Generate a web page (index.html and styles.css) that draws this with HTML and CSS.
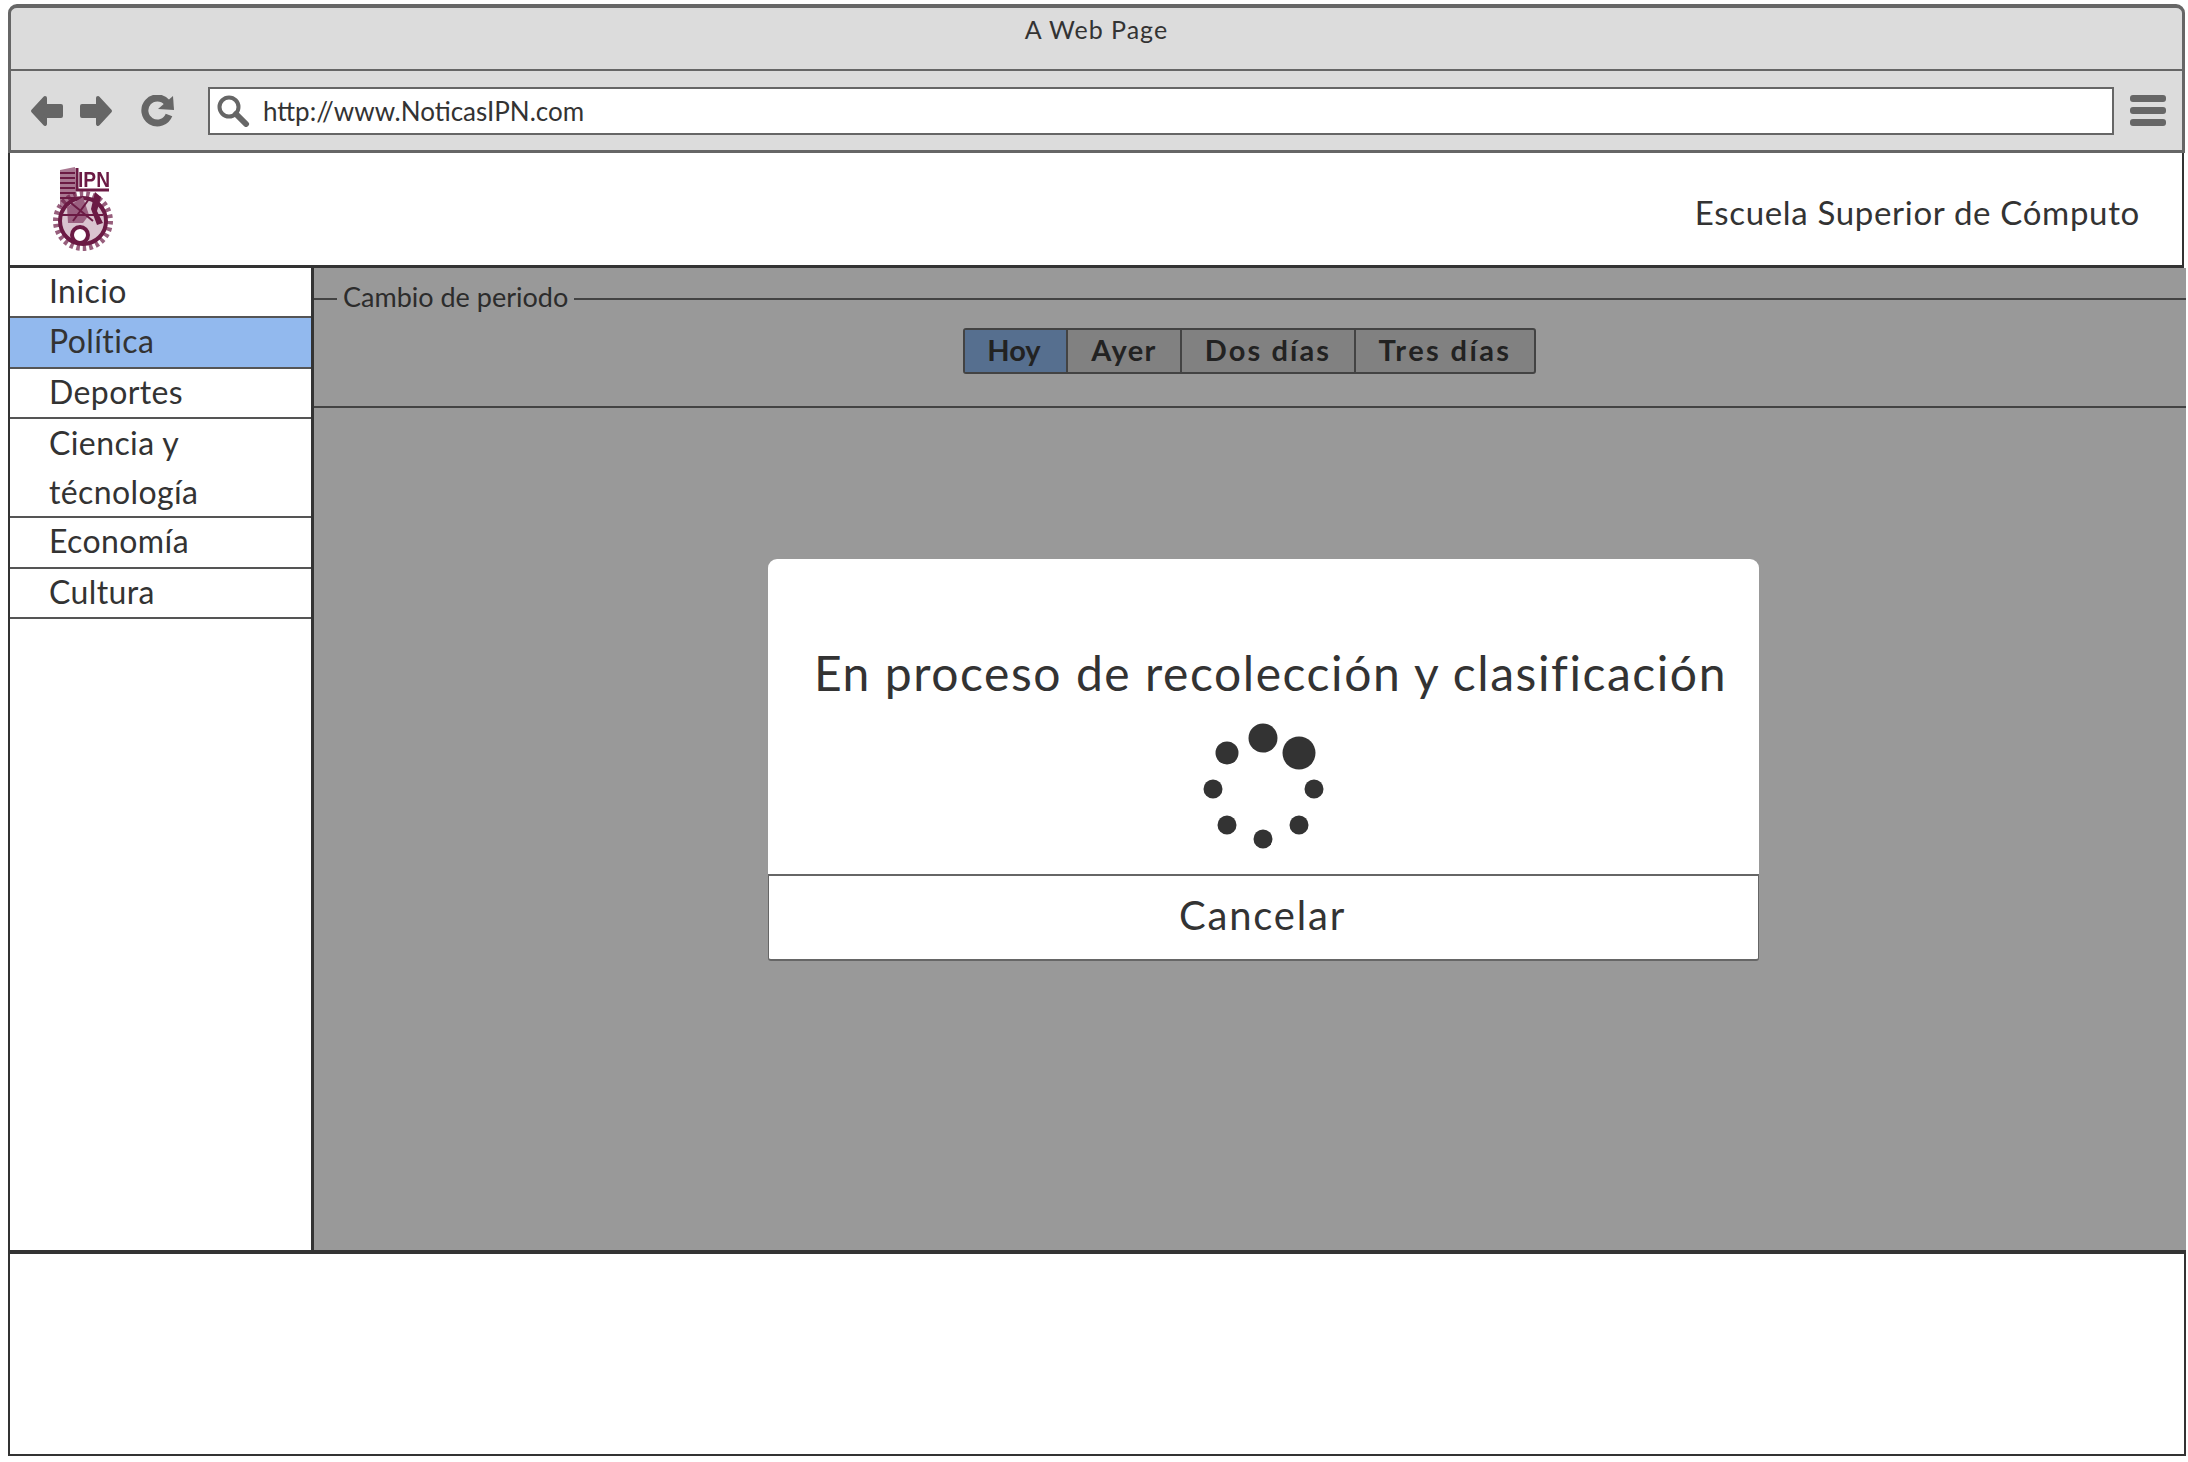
FILE: index.html
```html
<!DOCTYPE html>
<html lang="es">
<head>
<meta charset="utf-8">
<title>A Web Page</title>
<link rel="stylesheet" href="styles.css">
</head>
<body>
<div class="window">
  <div class="chrome">
    <div class="titlebar">A Web Page</div>
    <div class="toolbar">
      <svg class="nav-icons" width="160" height="32" viewBox="0 0 160 32">
        <path class="ico-round" d="M15 3 L3 16 L15 29 L15 21 L31 21 L31 11 L15 11 Z"/>
        <path class="ico-round" d="M68 3 L80 16 L68 29 L68 21 L52 21 L52 11 L68 11 Z"/>
        <path class="ico-line" d="M137 7.5 A12.5 12.5 0 1 0 139 20"/>
        <path class="ico" d="M128 14 L143 1 L144 15 Z"/>
      </svg>
      <div class="urlbar">
        <svg class="search" width="34" height="32" viewBox="0 0 34 32">
          <circle class="ico-ring" cx="13" cy="12" r="9.5"/>
          <path class="ico-handle" d="M20 19 L30 29"/>
        </svg>
        <span class="url">http://www.NoticasIPN.com</span>
      </div>
      <div class="burger"><span></span><span></span><span></span></div>
    </div>
  </div>
  <header class="pagehead">
    <svg class="logo" width="60" height="87" viewBox="0 0 60 87">
      <g class="logo-art">
        <path class="logo-tower" d="M7 5 L22 2 L23 40 L7 42 Z"/>
        <path class="logo-stripes" d="M7 8 H22 M7 13 H22 M7 18 H22 M7 23 H22 M7 28 H22 M7 33 H22"/>
        <path class="logo-frame" d="M24 3 V25 H56"/>
        <text class="logo-text" x="25" y="22" textLength="32" lengthAdjust="spacingAndGlyphs">IPN</text>
        <circle class="logo-teeth" cx="30" cy="56" r="27"/>
        <circle class="logo-gear" cx="30" cy="56" r="23"/>
        <path class="logo-bolt" d="M42 27 L48 32 L44 46 L50 58 L44 60 L38 44 Z"/>
        <path class="logo-inner" d="M14 42 L30 32 L36 50 L30 58 L15 58 Z"/>
        <path class="logo-mark" d="M18 38 L40 56 M36 34 L20 56 M8 50 H50"/>
        <circle class="logo-white" cx="27" cy="70" r="8"/>
      </g>
    </svg>
    <div class="school">Escuela Superior de Cómputo</div>
  </header>
  <div class="content">
    <nav class="sidebar">
      <a class="item">Inicio</a>
      <a class="item item-active">Política</a>
      <a class="item">Deportes</a>
      <a class="item item-wrap">Ciencia y<br>técnología</a>
      <a class="item">Economía</a>
      <a class="item">Cultura</a>
    </nav>
    <main class="main">
      <fieldset class="period">
        <legend class="period-label">Cambio de periodo</legend>
        <div class="tabs">
          <span class="tab tab-on">Hoy</span>
          <span class="tab tab-2">Ayer</span>
          <span class="tab tab-3">Dos días</span>
          <span class="tab tab-4">Tres días</span>
        </div>
      </fieldset>
      <div class="overlay">
        <div class="modal">
          <div class="modal-body">
            <div class="modal-title">En proceso de recolección y clasificación</div>
            <svg class="spinner" width="130" height="130" viewBox="0 0 130 130">
              <circle cx="64" cy="16" r="14.5"/>
              <circle cx="100" cy="31" r="16.5"/>
              <circle cx="28" cy="31" r="11.5"/>
              <circle cx="14" cy="67" r="9.5"/>
              <circle cx="115" cy="67" r="9.5"/>
              <circle cx="28" cy="103" r="9.5"/>
              <circle cx="100" cy="103" r="9.5"/>
              <circle cx="64" cy="117" r="9.5"/>
            </svg>
          </div>
          <div class="modal-action">Cancelar</div>
        </div>
      </div>
    </main>
  </div>
  <footer class="pagefoot"></footer>
</div>
</body>
</html>
```
FILE: styles.css
```css
* { box-sizing: border-box; }
html, body { margin: 0; padding: 0; background: #fff; }
body { padding: 4px 2px 0 8px; font-family: Lato, "Liberation Sans", sans-serif; color: #333; }
.window { width: 2178px; height: 1452px; display: flex; flex-direction: column; }

.chrome { height: 149px; margin-right: 1px; background: #dcdcdc; border: 3px solid #666; border-top-width: 4px; border-radius: 9px 9px 0 0; display: flex; flex-direction: column; }
.titlebar { height: 63px; flex: none; border-bottom: 2px solid #666; margin-left: -1px; margin-right: -1px; text-align: center; font-size: 25px; line-height: 42px; color: #333; letter-spacing: 1px; }
.toolbar { flex: 1; display: flex; align-items: flex-start; padding: 23px 0 0 19px; }
.nav-icons { flex: none; margin-top: 1px; }
.ico { fill: #666; }
.ico-round { fill: #666; stroke: #666; stroke-width: 4; stroke-linejoin: round; }
.ico-line { fill: none; stroke: #666; stroke-width: 7; }
.urlbar { flex: none; width: 1906px; height: 48px; margin: -7px 0 0 18px; background: #fff; border: 2px solid #666; display: flex; align-items: center; padding-left: 7px; }
.search { flex: none; margin-left: -1px; }
.ico-ring { fill: none; stroke: #666; stroke-width: 4; }
.ico-handle { fill: none; stroke: #666; stroke-width: 6; stroke-linecap: round; }
.url { margin-left: 13px; font-size: 26px; color: #333; white-space: nowrap; }
.burger { flex: none; margin: 1px 0 0 16px; width: 36px; display: flex; flex-direction: column; gap: 5px; }
.burger span { display: block; height: 7px; border-radius: 3px; background: #666; }

.pagehead { height: 115px; flex: none; margin-right: 2px; background: #fff; border: 3px solid #333; border-top: 0; border-right-width: 2px; border-left-width: 2px; display: flex; align-items: flex-start; justify-content: space-between; padding: 12px 43px 0 43px; }
.logo { flex: none; overflow: visible; }
.logo-art { filter: blur(0.7px); }
.logo-tower { fill: #a97892; }
.logo-stripes { fill: none; stroke: #6b1a44; stroke-width: 2; }
.logo-text { fill: #6b1a44; font-family: "Liberation Sans", sans-serif; font-size: 22px; font-weight: 700; }
.logo-frame { fill: none; stroke: #6b1a44; stroke-width: 3; }
.logo-teeth { fill: none; stroke: #6b1a44; stroke-width: 6; stroke-dasharray: 3.5 3; opacity: 0.7; }
.logo-gear { fill: #d9c3cf; stroke: #6b1a44; stroke-width: 4; }
.logo-bolt { fill: #6b1a44; }
.logo-inner { fill: #9a6080; }
.logo-mark { fill: none; stroke: #6b1a44; stroke-width: 2; }
.logo-white { fill: #fff; stroke: #6b1a44; stroke-width: 4; }
.school { font-size: 33px; line-height: 44px; margin-top: 25px; margin-right: -1px; color: #333; letter-spacing: 0.68px; white-space: nowrap; }

.content { flex: 1; min-height: 0; display: flex; border-bottom: 4px solid #333; }
.sidebar { flex: none; width: 306px; background: #fff; border-left: 2.5px solid #333; border-right: 3px solid #333; display: flex; flex-direction: column; }
.item { display: block; border-bottom: 2px solid #555; padding: 0 0 2px 39px; font-size: 32px; line-height: 46.3px; color: #333; letter-spacing: 0.4px; }
.item-wrap { padding-bottom: 0; line-height: 48.7px; }
.item-active { background: #92b9ee; }
.main { flex: 1; position: relative; background: #fff; }
.period { margin: 14px 0 0; padding: 12px 0 0; height: 126px; border: 2px solid #717171; border-right: 0; border-left: 0; }
.period-label { margin-left: 23px; padding: 0 6px 4px; font-size: 27px; line-height: 30px; color: #4a4a4a; }
.tabs { display: flex; justify-content: flex-start; margin-left: 649px; width: 573px; height: 46px; border: 2px solid #717171; border-radius: 3px; background: #d8d8d8; }
.tab { display: block; text-align: center; font-size: 29px; font-weight: 700; line-height: 39px; color: #3a3a3a; border-right: 2px solid #717171; }
.tab-on { width: 103px; padding-right: 3px; background: #8fb9ee; }
.tab-2 { width: 114px; letter-spacing: 1.4px; }
.tab-3 { width: 174px; letter-spacing: 2.1px; }
.tab-4 { flex: 1; border-right: 0; letter-spacing: 2.4px; }

.overlay { position: absolute; inset: 0; background: rgba(0, 0, 0, 0.4); padding: 291px 0 0 454px; }
.modal { width: 991px; height: 402px; display: flex; flex-direction: column; }
.modal-body { height: 315px; flex: none; background: #fff; border-radius: 9px 9px 0 0; display: flex; flex-direction: column; align-items: center; padding-top: 84px; }
.modal-title { margin-left: 14px; font-size: 48px; line-height: 60px; color: #333; white-space: nowrap; letter-spacing: 1.55px; }
.spinner { flex: none; margin-top: 19px; fill: #333; }
.modal-action { flex: 1; background: #fff; border: 1px solid #666; border-top-width: 2px; border-bottom-width: 2px; border-radius: 0 0 3px 3px; text-align: center; font-size: 40px; line-height: 78px; color: #333; letter-spacing: 1.8px; padding-right: 2px; }

.pagefoot { flex: none; height: 202px; background: #fff; border: 2.5px solid #333; border-top: 0; }
```
